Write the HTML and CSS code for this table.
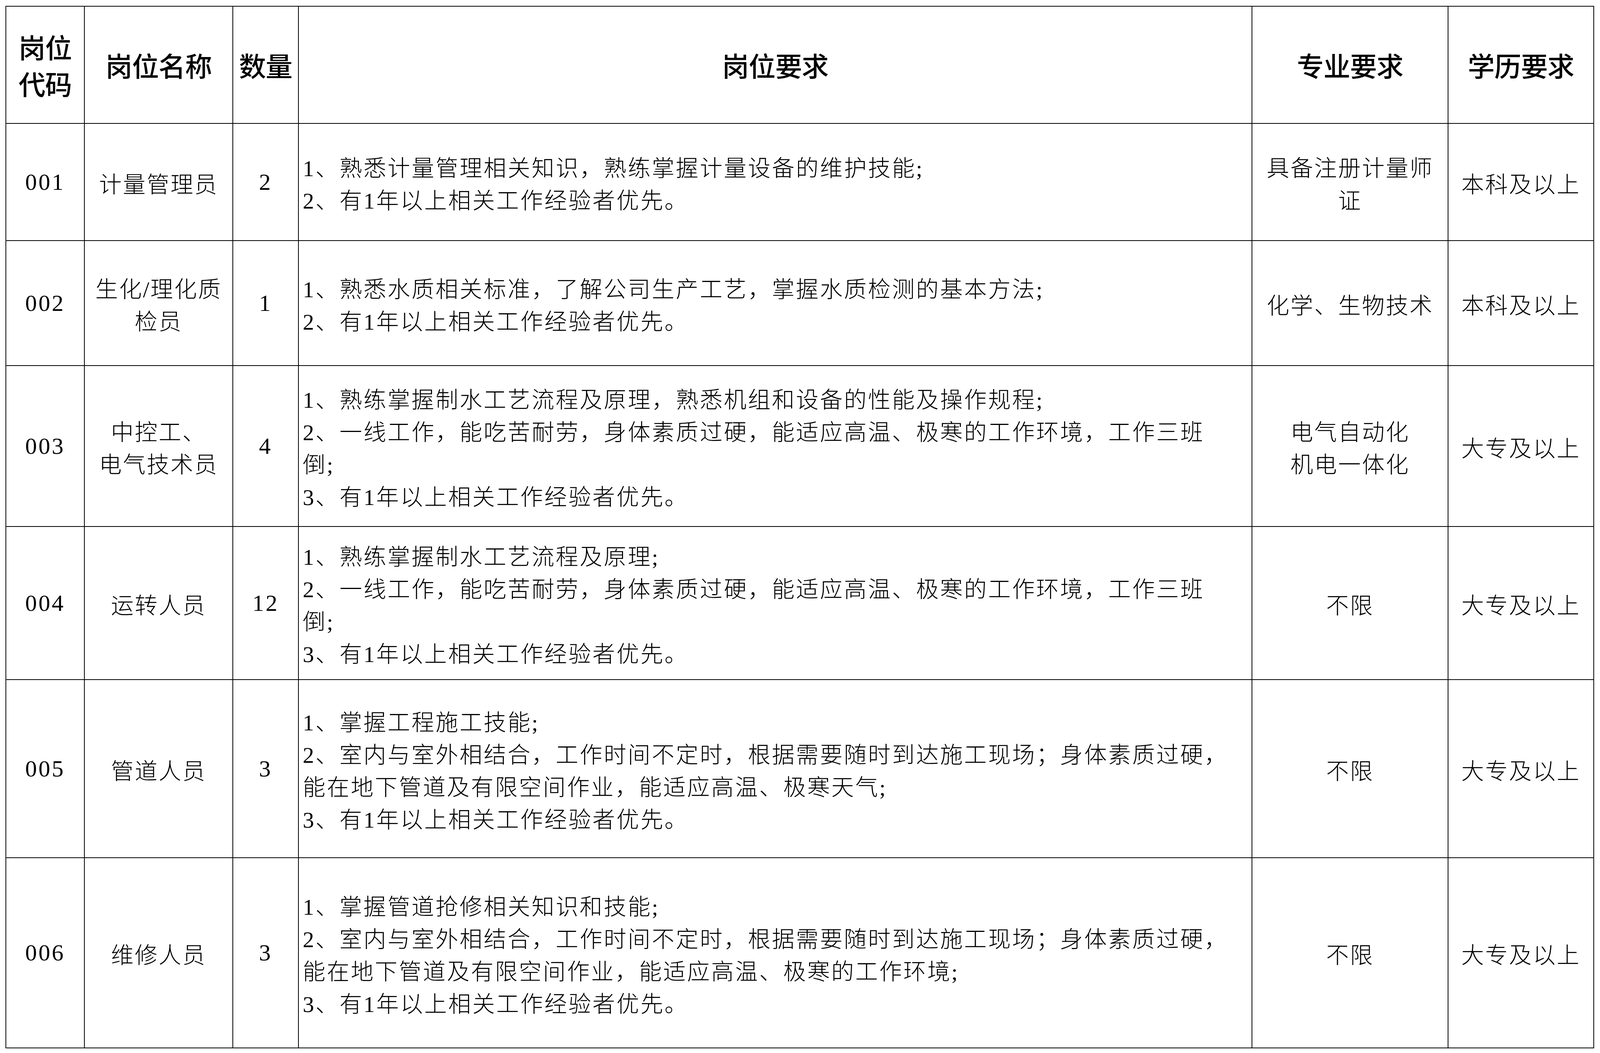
FILE: index.html
```html
<!DOCTYPE html>
<html lang="zh-CN">
<head>
<meta charset="utf-8">
<title>岗位需求表</title>
<link rel="stylesheet" href="styles.css">
</head>
<body>
<div class="sheet">
  <div class="grid">
    <div class="cell hd">岗位<br>代码</div>
    <div class="cell hd">岗位名称</div>
    <div class="cell hd">数量</div>
    <div class="cell hd">岗位要求</div>
    <div class="cell hd">专业要求</div>
    <div class="cell hd">学历要求</div>

    <div class="cell num">001</div>
    <div class="cell">计量管理员</div>
    <div class="cell num">2</div>
    <div class="cell req">
      <div class="ln">1、熟悉计量管理相关知识，熟练掌握计量设备的维护技能;</div>
      <div class="ln">2、有1年以上相关工作经验者优先。</div>
    </div>
    <div class="cell">具备注册计量师<br>证</div>
    <div class="cell">本科及以上</div>

    <div class="cell num">002</div>
    <div class="cell">生化/理化质<br>检员</div>
    <div class="cell num">1</div>
    <div class="cell req">
      <div class="ln">1、熟悉水质相关标准，了解公司生产工艺，掌握水质检测的基本方法;</div>
      <div class="ln">2、有1年以上相关工作经验者优先。</div>
    </div>
    <div class="cell">化学、生物技术</div>
    <div class="cell">本科及以上</div>

    <div class="cell num">003</div>
    <div class="cell">中控工、<br>电气技术员</div>
    <div class="cell num">4</div>
    <div class="cell req">
      <div class="ln">1、熟练掌握制水工艺流程及原理，熟悉机组和设备的性能及操作规程;</div>
      <div class="ln">2、一线工作，能吃苦耐劳，身体素质过硬，能适应高温、极寒的工作环境，工作三班</div>
      <div class="ln">倒;</div>
      <div class="ln">3、有1年以上相关工作经验者优先。</div>
    </div>
    <div class="cell">电气自动化<br>机电一体化</div>
    <div class="cell">大专及以上</div>

    <div class="cell num">004</div>
    <div class="cell">运转人员</div>
    <div class="cell num">12</div>
    <div class="cell req">
      <div class="ln">1、熟练掌握制水工艺流程及原理;</div>
      <div class="ln">2、一线工作，能吃苦耐劳，身体素质过硬，能适应高温、极寒的工作环境，工作三班</div>
      <div class="ln">倒;</div>
      <div class="ln">3、有1年以上相关工作经验者优先。</div>
    </div>
    <div class="cell">不限</div>
    <div class="cell">大专及以上</div>

    <div class="cell num">005</div>
    <div class="cell">管道人员</div>
    <div class="cell num">3</div>
    <div class="cell req">
      <div class="ln">1、掌握工程施工技能;</div>
      <div class="ln">2、室内与室外相结合，工作时间不定时，根据需要随时到达施工现场；身体素质过硬，</div>
      <div class="ln">能在地下管道及有限空间作业，能适应高温、极寒天气;</div>
      <div class="ln">3、有1年以上相关工作经验者优先。</div>
    </div>
    <div class="cell">不限</div>
    <div class="cell">大专及以上</div>

    <div class="cell num">006</div>
    <div class="cell">维修人员</div>
    <div class="cell num">3</div>
    <div class="cell req">
      <div class="ln">1、掌握管道抢修相关知识和技能;</div>
      <div class="ln">2、室内与室外相结合，工作时间不定时，根据需要随时到达施工现场；身体素质过硬，</div>
      <div class="ln">能在地下管道及有限空间作业，能适应高温、极寒的工作环境;</div>
      <div class="ln">3、有1年以上相关工作经验者优先。</div>
    </div>
    <div class="cell">不限</div>
    <div class="cell">大专及以上</div>
  </div>
</div>
</body>
</html>
```

FILE: styles.css
```css
html, body {
  margin: 0;
  padding: 0;
  background: #ffffff;
}

body {
  color: #000000;
  font-family: "Liberation Serif", "Noto Sans CJK SC", serif;
}

.sheet {
  padding: 15px 0 0 14px;
}

.grid {
  display: grid;
  width: max-content;
  grid-template-columns: 199px 378px 166px 2439px 500px 371px;
  grid-template-rows: 298px 298px 318px 410px 390px 454px 485px;
  gap: 2px;
  padding: 2px;
  background: #000000;
}

.cell {
  background: #ffffff;
  display: flex;
  flex-direction: column;
  justify-content: center;
  align-items: center;
  text-align: center;
  padding-top: 14px;
  font-size: 58px;
  line-height: 83px;
  letter-spacing: 3px;
  font-weight: 300;
}

.cell.num {
  padding-top: 0;
  letter-spacing: 4px;
  font-size: 60px;
}

.cell.hd {
  font-size: 69px;
  line-height: 94px;
  letter-spacing: -1px;
  font-weight: 500;
}

.cell.req {
  align-items: flex-start;
  text-align: left;
  padding-left: 10px;
  letter-spacing: 3.5px;
}

.ln {
  white-space: nowrap;
}
```
